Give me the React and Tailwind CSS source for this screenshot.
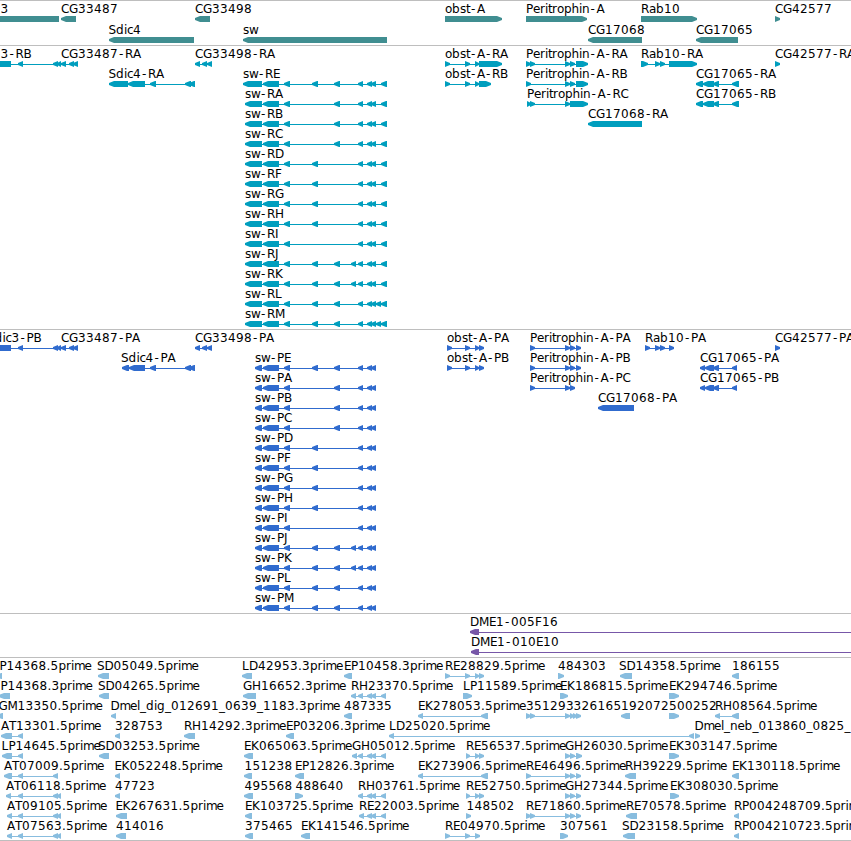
import React from "react";

// Horizontal advance of each label character, in pixels.
const ADVANCE = {
  A: 8, B: 8, C: 8, D: 9, E: 7, F: 7, G: 9, H: 9, I: 4, J: 4, K: 8, L: 7, M: 10,
  N: 9, P: 7, R: 8, S: 7.5, T: 7, a: 7, b: 8, c: 6, d: 8, e: 7, g: 8, h: 7.5, i: 3,
  l: 3, m: 10.5, n: 7.5, o: 7, p: 7.5, r: 5, s: 6, t: 4, w: 9, "-": 7, ".": 4, _: 6,
};

const charPositions = (label, x) => {
  let at = x;
  return [...label]
    .map((ch) => {
      const here = ch === "-" ? at + 1 : at;
      at += ADVANCE[ch] ?? 8;
      return here;
    })
    .join(" ");
};

// A feature is [label, labelX, strand, exons, optional line end].
const f = (label, x, strand, exons, end) => ({ label, x, strand, exons, end });

const sdic3 = [[-8, 11], [18, 23], [53, 58], [57, 61]];
const cg33487 = [[61, 66], [69, 74], [73, 78]];
const cg33498 = [[195, 200], [202, 207], [207, 212]];
const cg17065R = [[696, 703], [703, 714], [713, 719], [732, 739]];
const cg17065P = [[700, 705], [705, 714], [713, 719], [732, 737]];
const obstP = [[447, 452], [465, 470], [475, 479], [479, 484]];
const periRB = [[526, 531], [565, 570], [570, 575], [576, 588]];
const periP = [[530, 535], [565, 570], [570, 575], [576, 581]];

const a = [312, 318], b = [334, 340], c = [351, 356];
const swMiddle = {
  E: [a, b], A: [b], B: [b], C: [b], D: [a], F: [a], G: [a], H: [a], I: [],
  J: [a, b, c], K: [a, b, c], L: [a, b], M: [a, b],
};
const swR = (k) =>
  f("sw-R" + k, k === "E" ? 243 : 245, "L", [
    [k === "E" ? 243 : 245, 262], [263, 279], [284, 290], ...swMiddle[k],
    [358, 363], [367, 372], [371, 376],
    ...(k === "L" || k === "M" ? [[376, 381]] : []), [381, 387],
  ]);
const swP = (k) =>
  f("sw-P" + k, 255, "L", [
    [255, 262], [263, 279], [284, 290], ...swMiddle[k], [358, 363], [367, 372], [371, 376],
  ]);

const genes = [
  [
    f("3", 0.5, "L", [[-24, 59]]),
    f("CG33487", 61, "L", [[61, 76]]),
    f("CG33498", 195, "L", [[195, 210]]),
    f("obst-A", 445, "R", [[445, 502]]),
    f("Peritrophin-A", 526, "R", [[526, 587]]),
    f("Rab10", 641, "R", [[641, 697]]),
    f("CG42577", 775, "R", [[775, 780]]),
  ],
  [
    f("Sdic4", 108.5, "L", [[109, 194]]),
    f("sw", 243, "L", [[243, 387]]),
    f("CG17068", 588, "L", [[588, 642]]),
    f("CG17065", 696, "L", [[696, 738]]),
  ],
];

const transcripts = [
  [
    f("3-RB", 0.5, "L", sdic3),
    f("CG33487-RA", 61, "L", cg33487),
    f("CG33498-RA", 195, "L", cg33498),
    f("obst-A-RA", 445, "R", [[445, 450], [465, 470], [475, 479], [479, 502]]),
    f("Peritrophin-A-RA", 526, "R", [[526, 531], [530, 535], [565, 570], [570, 575], [576, 588]]),
    f("Rab10-RA", 641, "R", [[641, 648], [655, 660], [660, 665], [669, 697]]),
    f("CG42577-RA", 775, "R", [[775, 780]]),
  ],
  [
    f("Sdic4-RA", 108.5, "L", [[109, 128], [128, 145], [150, 156], [185, 191], [189, 195]]),
    swR("E"),
    f("obst-A-RB", 445, "R", [[445, 450], [465, 470], [475, 479], [479, 491]]),
    f("Peritrophin-A-RB", 526, "R", periRB),
    f("CG17065-RA", 696, "L", cg17065R),
  ],
  [
    swR("A"),
    f("Peritrophin-A-RC", 527, "R", [[527, 531], [530, 535], [565, 570], [570, 588]]),
    f("CG17065-RB", 696, "L", cg17065R),
  ],
  [swR("B"), f("CG17068-RA", 588, "L", [[588, 642]])],
  ...[..."CDFGHIJKLM"].map((k) => [swR(k)]),
];

const proteins = [
  [
    f("dic3-PB", -5.5, "L", sdic3),
    f("CG33487-PA", 61, "L", cg33487),
    f("CG33498-PA", 195, "L", cg33498),
    f("obst-A-PA", 447, "R", obstP),
    f("Peritrophin-A-PA", 530, "R", periP),
    f("Rab10-PA", 645, "R", [[645, 650], [655, 660], [660, 665], [669, 674]]),
    f("CG42577-PA", 775, "R", [[775, 780]]),
  ],
  [
    f("Sdic4-PA", 121, "L", [[122, 129], [129, 145], [150, 156], [185, 191], [189, 195]]),
    swP("E"),
    f("obst-A-PB", 447, "R", obstP),
    f("Peritrophin-A-PB", 530, "R", periP),
    f("CG17065-PA", 700, "L", cg17065P),
  ],
  [
    swP("A"),
    f("Peritrophin-A-PC", 530, "R", periP.slice(0, 3)),
    f("CG17065-PB", 700, "L", cg17065P),
  ],
  [swP("B"), f("CG17068-PA", 598, "L", [[598, 634]])],
  ...[..."CDFGHIJKLM"].map((k) => [swP(k)]),
];

const clones = [
  [f("DME1-005F16", 470, "L", [[470, 479]], 851)],
  [f("DME1-010E10", 471, "L", [[471, 479]], 851)],
];

const tail = [[367, 372], [371, 376], [381, 386]];
const at = [[18, 23], [53, 58], [57, 61]];
const re = [[466, 470], [475, 479], [479, 484]];
const gh = [[565, 570], [570, 575], [576, 581]];

const ests = [
  [
    f("P14368.5prime", -0.5, "L", [[-4, 2]]),
    f("SD05049.5prime", 97, "L", [[98, 109]]),
    f("LD42953.3prime", 242, "L", [[242, 252]]),
    f("EP10458.3prime", 344, "L", [[344, 352]]),
    f("RE28829.5prime", 445, "R", [[445, 450], [465, 470], [475, 479], [479, 484]]),
    f("484303", 558, "R", [[558, 564]]),
    f("SD14358.5prime", 619, "L", [[620, 632]]),
    f("186155", 732, "L", [[732, 739]]),
  ],
  [
    f("P14368.3prime", 0.5, "L", [[-1, 10]]),
    f("SD04265.5prime", 98, "L", [[99, 109]]),
    f("GH16652.3prime", 243, "L", [[243, 256]]),
    f("RH23370.5prime", 351, "L", [[351, 356], [358, 363], ...tail]),
    f("LP11589.5prime", 463, "R", [[463, 472]]),
    f("EK186815.5prime", 560, "R", [[560, 568]]),
    f("EK294746.5prime", 669, "R", [[669, 679]]),
  ],
  [
    f("GM13350.5prime", -1.5, "L", [[-3, 3]]),
    f("Dmel_dig_012691_0639_1183.3prime", 110.5, "L", [[111, 116]]),
    f("487335", 344, "L", [[344, 352]]),
    f("EK278053.5prime", 418, "L", [[418, 423], [481, 488]]),
    f("351293", 526, "R", [[526, 531], [530, 535], [565, 570], [570, 574]]),
    f("326165", 573.5, "R", [[573, 577], [576, 581]]),
    f("192072", 621, "L", [[621, 630]]),
    f("500252", 669, "R", [[669, 679]]),
    f("RH08564.5prime", 715, "L", [[715, 720], [732, 739]]),
  ],
  [
    f("AT13301.5prime", 1, "L", [[1, 12], [18, 23]]),
    f("328753", 115, "L", [[115, 120]]),
    f("RH14292.3prime", 184, "L", [[184, 195]]),
    f("EP03206.3prime", 286, "L", [[286, 294]]),
    f("LD25020.5prime", 389, "L", [[389, 394], [689, 694]]),
    f("Dmel_neb_013860_0825_", 694.5, "R", [[695, 700]]),
  ],
  [
    f("LP14645.5prime", 1.5, "L", [[2, 12], [18, 23]]),
    f("SD03253.5prime", 98, "L", [[99, 109]]),
    f("EK065063.5prime", 244, "L", [[244, 253]]),
    f("GH05012.5prime", 352, "L", [[352, 357], [358, 363], ...tail]),
    f("RE56537.5prime", 466, "R", re),
    f("GH26030.5prime", 565, "R", [[565, 570], [570, 575], [576, 582]]),
    f("EK303147.5prime", 669, "R", [[669, 679]]),
  ],
  [
    f("AT07009.5prime", 4, "L", [[4, 12], [18, 23], [53, 58]]),
    f("EK052248.5prime", 114.5, "L", [[115, 120]]),
    f("151238", 244.5, "L", [[244, 252]]),
    f("EP12826.3prime", 295, "L", [[295, 304]]),
    f("EK273906.5prime", 418, "L", [[418, 423], [481, 488]]),
    f("RE46496.5prime", 526, "R", [[526, 531], ...gh]),
    f("RH39229.5prime", 625, "L", [[625, 636]]),
    f("EK130118.5prime", 732, "L", [[732, 739]]),
  ],
  [
    f("AT06118.5prime", 6, "L", [[6, 11], ...at]),
    f("47723", 115, "L", [[115, 120]]),
    f("495568", 244.5, "L", [[244, 253]]),
    f("488640", 295.5, "R", [[295, 303]]),
    f("RH03761.5prime", 358, "L", [[358, 363], ...tail]),
    f("RE52750.5prime", 466, "R", re),
    f("GH27344.5prime", 565, "R", gh),
    f("EK308030.5prime", 670, "R", [[670, 679]]),
  ],
  [
    f("AT09105.5prime", 7, "L", [[7, 12], ...at]),
    f("EK267631.5prime", 115.5, "L", [[116, 127]]),
    f("EK103725.5prime", 245, "L", [[245, 252]]),
    f("RE22003.5prime", 359, "L", [[359, 364], ...tail]),
    f("148502", 466.5, "R", [[466, 471]]),
    f("RE71860.5prime", 526, "R", [[526, 531], [530, 535], ...gh]),
    f("RE70578.5prime", 626, "L", [[626, 637]]),
    f("RP004248709.5prime", 734, "L", [[734, 739]]),
  ],
  [
    f("AT07563.5prime", 7, "L", [[7, 12], ...at]),
    f("414016", 116, "L", [[116, 126]]),
    f("375465", 245, "L", [[245, 253]]),
    f("EK141546.5prime", 301, "L", [[301, 310]]),
    f("RE04970.5prime", 445, "R", [[445, 450], [465, 470], [475, 480]]),
    f("307561", 560, "R", [[560, 568]]),
    f("SD23158.5prime", 622, "L", [[623, 635]]),
    f("RP004210723.5prime", 734, "L", [[734, 739]]),
  ],
];

// Blunt-nosed arrow that reaches full height five pixels behind its tip.
function exonPoints([s, e], strand) {
  const head = Math.min(5, e - s);
  const tip = strand === "L" ? s : e;
  const back = strand === "L" ? e : s;
  const neck = strand === "L" ? s + head : e - head;
  return `${tip},17 ${neck},15 ${back},15 ${back},21 ${neck},21 ${tip},19`;
}

function Feature({ label, x, strand, exons, end }) {
  const from = exons[0][0] + 1;
  const to = end ?? exons[exons.length - 1][1] - 1;
  return (
    <g>
      {(exons.length > 1 || end) && (
        <rect x={from} y={18} width={to - from} height={1} shapeRendering="crispEdges" />
      )}
      {exons.map((exon, i) => (
        <polygon key={i} points={exonPoints(exon, strand)} />
      ))}
      <text x={charPositions(label, x)} y={12} className="fill-black">
        {label}
      </text>
    </g>
  );
}

function Track({ rows, className, rowClass = "h-5" }) {
  return (
    <section className={`border-t border-[#bebebe] ${className}`}>
      {rows.map((features, i) => (
        <svg key={i} className={`block w-full overflow-visible fill-current ${rowClass}`}>
          {features.map((feature) => (
            <Feature key={feature.label} {...feature} />
          ))}
        </svg>
      ))}
    </section>
  );
}

export default function App() {
  return (
    <main className="flex h-[841px] w-[851px] flex-col overflow-hidden bg-white font-['DejaVu_Sans',sans-serif] text-[12px]">
      <Track rows={genes} className="h-[45px] shrink-0 text-[#408e91]" rowClass="h-[21px]" />
      <Track rows={transcripts} className="h-[284px] shrink-0 text-[#009ebe]" />
      <Track rows={proteins} className="h-[284px] shrink-0 text-[#306bce]" />
      <Track rows={clones} className="h-11 shrink-0 text-[#7757a8]" />
      <Track rows={ests} className="h-[183px] shrink-0 text-[#88bddf]" />
      <div className="h-px shrink-0 bg-[#bebebe]" />
    </main>
  );
}
